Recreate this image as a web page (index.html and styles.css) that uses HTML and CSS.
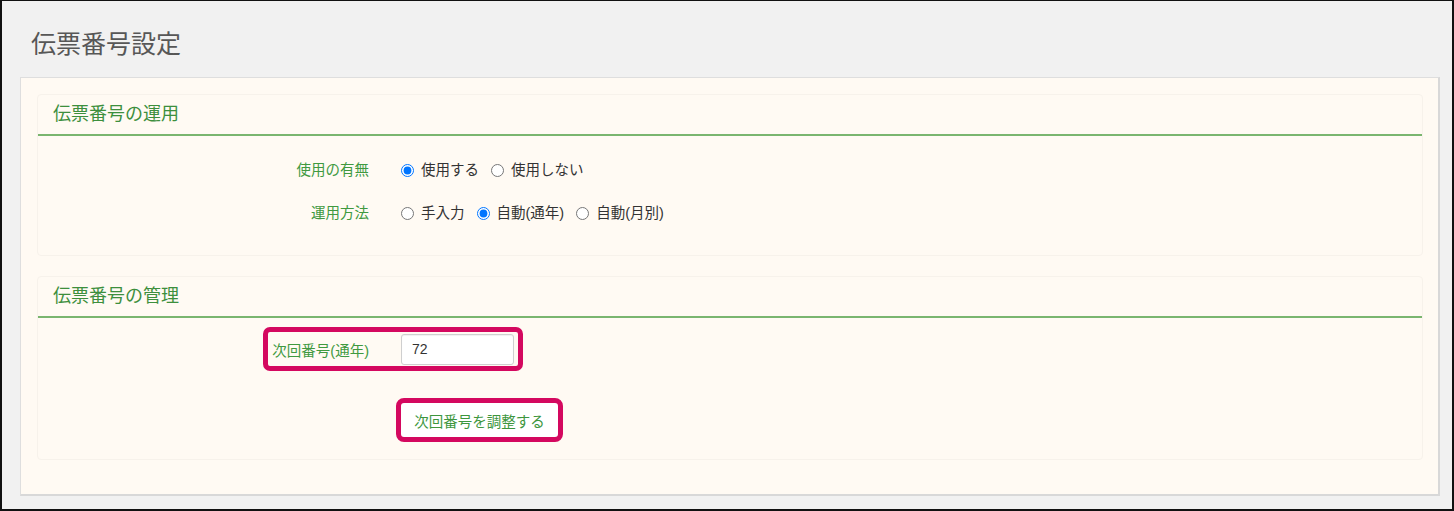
FILE: index.html
```html
<!DOCTYPE html>
<html lang="ja">
<head>
<meta charset="utf-8">
<title>伝票番号設定</title>
<link rel="stylesheet" href="styles.css">
</head>
<body>
<div class="frame">
  <h1 class="page-title">伝票番号設定</h1>
  <div class="panel">
    <section class="card">
      <h2 class="card-header">伝票番号の運用</h2>
      <div class="card-body form-grid">
        <div class="field-label">使用の有無</div>
        <div class="options">
          <label class="option"><input type="radio" name="use" checked>使用する</label>
          <label class="option"><input type="radio" name="use">使用しない</label>
        </div>
        <div class="field-label">運用方法</div>
        <div class="options">
          <label class="option"><input type="radio" name="method">手入力</label>
          <label class="option"><input type="radio" name="method" checked>自動(通年)</label>
          <label class="option"><input type="radio" name="method">自動(月別)</label>
        </div>
      </div>
    </section>
    <section class="card">
      <h2 class="card-header">伝票番号の管理</h2>
      <div class="card-body manage">
        <div class="highlight next-row">
          <span class="next-label">次回番号(通年)</span>
          <input class="text-input" type="text" value="72">
        </div>
        <div class="action-row">
          <button class="highlight adjust-btn" type="button">次回番号を調整する</button>
        </div>
      </div>
    </section>
  </div>
</div>
</body>
</html>
```

FILE: styles.css
```css
* { box-sizing: border-box; }

html, body {
  margin: 0;
  padding: 0;
}

body {
  font-family: "Liberation Sans", "Noto Sans CJK JP", sans-serif;
  font-size: 14.5px;
  color: #333;
}

.frame {
  width: 1454px;
  height: 511px;
  border: 2px solid #111;
  border-top-width: 1px;
  background: #f1f1f1;
  padding: 0 12px 0 18px;
  display: flex;
  flex-direction: column;
}

.page-title {
  margin: 0;
  padding: 25px 0 0 11px;
  height: 76px;
  font-size: 25px;
  line-height: 36px;
  font-weight: normal;
  color: #575757;
}

.panel {
  background: #fffaf3;
  border: 1px solid #dedede;
  border-right: 2px solid #d8d8d8;
  border-bottom: 2px solid #d8d8d8;
  padding: 16px 15px 34px 16px;
  display: flex;
  flex-direction: column;
  gap: 20px;
}

.card {
  border: 1px solid #f7f2eb;
  border-radius: 4px;
  background: #fffaf3;
}

.card-header {
  margin: 0;
  padding: 7px 15px 8px;
  font-size: 18px;
  line-height: 24px;
  font-weight: normal;
  color: #3d8f3d;
  border-bottom: 2px solid #7ab56f;
}

.form-grid {
  display: grid;
  grid-template-columns: 331px 1fr;
  column-gap: 32px;
  row-gap: 19px;
  padding: 22px 0 30px;
}

.field-label {
  text-align: right;
  color: #40993f;
  line-height: 24px;
}

.options {
  display: flex;
  align-items: center;
  gap: 12px;
  line-height: 24px;
}

.option {
  display: inline-flex;
  align-items: center;
  color: #333;
}

.option input {
  width: 13px;
  height: 13px;
  margin: 0 7px 0 0;
}

.manage {
  padding: 9px 0 17px;
  display: flex;
  flex-direction: column;
  gap: 27px;
}

.highlight {
  border: 5px solid #d4085f;
  border-radius: 7px;
}

.next-row {
  align-self: flex-start;
  margin-left: 225px;
  display: flex;
  align-items: center;
  gap: 32px;
  height: 44px;
  padding: 0 4px 0 0;
}

.next-label {
  width: 101px;
  text-align: right;
  color: #40993f;
  white-space: nowrap;
}

.text-input {
  width: 113px;
  height: 31px;
  border: 1px solid #cfcfcf;
  border-radius: 3px;
  background: #fff;
  padding: 0 10px;
  font-family: "Liberation Sans", sans-serif;
  font-size: 14px;
  color: #333;
  box-shadow: inset 0 1px 1px rgba(0,0,0,0.06);
}

.action-row {
  margin-left: 358px;
  display: flex;
}

.adjust-btn {
  width: 167px;
  height: 44px;
  background: #fff;
  border-radius: 8px;
  font-family: "Liberation Sans", "Noto Sans CJK JP", sans-serif;
  font-size: 14.5px;
  color: #3d963d;
  padding: 0;
  cursor: pointer;
}
```
